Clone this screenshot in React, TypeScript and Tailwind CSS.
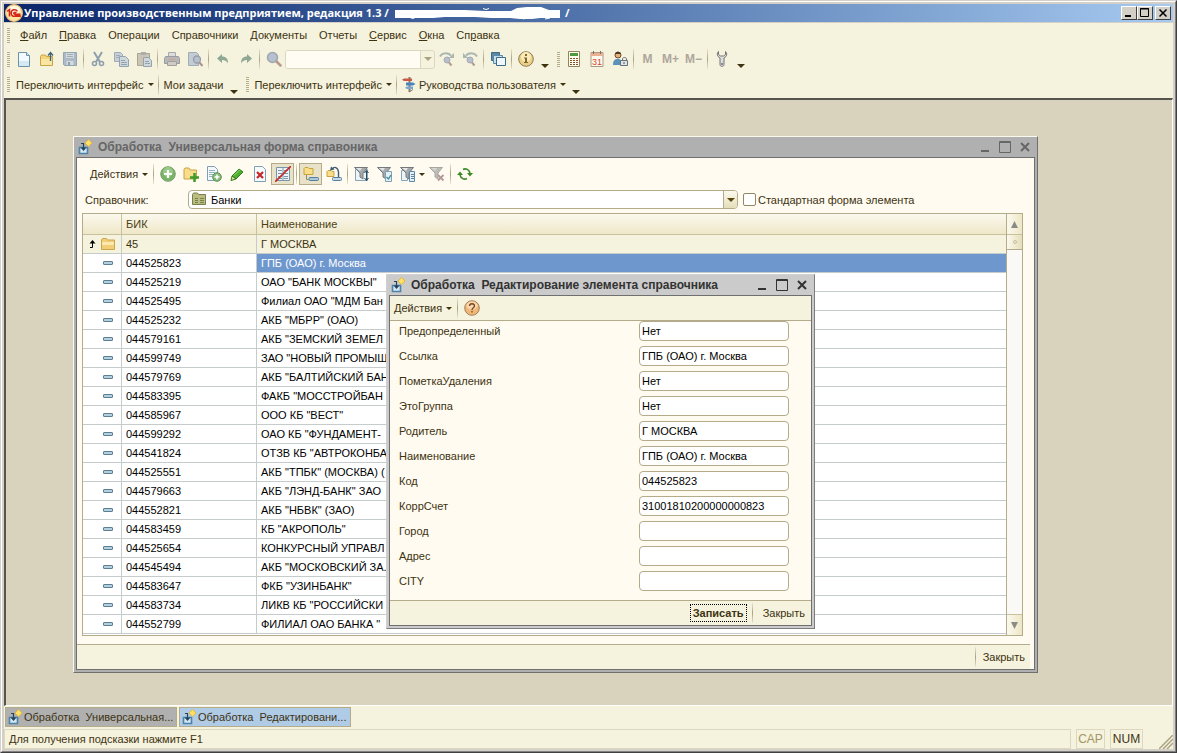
import React from 'react';

const Svg = ({ children, size = 16 }: { children: React.ReactNode; size?: number }) => {
  return <svg width={size} height={size} viewBox="0 0 16 16" fill="none" aria-hidden="true" className="shrink-0">
      {children}
    </svg>;
};

/* Main toolbar icons */
const NewIcon = () => <Svg>
    <path d="M2.500 1.500h8l3 3v11h-11z" fill="#f4fbff" stroke="#6d93a8" />
    <path d="M10.500 1.500v3h3" fill="#cfe4ef" stroke="#6d93a8" />
    <path d="M3 10h10v5H3z" fill="#d5e9f3" />
  </Svg>;
const OpenIcon = () => <Svg>
    <path d="M1.500 5.500l1-1.500h4l1 1.500h6v9h-12z" fill="#f3d57c" stroke="#c9a445" />
    <path d="M2 8h11v6H2z" fill="#fae6a2" />
    <path d="M11.500 10V2M9 4.500l2.500-3 2.500 3" stroke="#3b6276" strokeWidth="1.300" />
  </Svg>;
const SaveIcon = () => <Svg>
    <path d="M1.500 1.500h13v13h-12l-1-1z" fill="#abbac4" stroke="#93a5b1" />
    <path d="M4 2h8v5H4z" fill="#d3d9dc" />
    <path d="M5 3.500h6M5 5.500h6" stroke="#9eadb5" />
    <path d="M4.500 10h7v4h-7z" fill="#d3d9dc" />
    <path d="M6 11h2v3H6z" fill="#8d9fac" />
  </Svg>;
const CutIcon = () => <Svg>
    <path d="M4 1l6 10M12 1L6 11" stroke="#8ea0ae" strokeWidth="2" />
    <circle cx="4.500" cy="12.500" r="2" stroke="#8ea0ae" strokeWidth="1.600" />
    <circle cx="11.500" cy="12.500" r="2" stroke="#8ea0ae" strokeWidth="1.600" />
  </Svg>;
const CopyIcon = () => <Svg>
    <path d="M1.500 1.500h6l2 2v7h-8z" fill="#c8d0d6" stroke="#9dacb8" />
    <path d="M3 4.500h4M3 6.500h4" stroke="#9dacb8" />
    <path d="M6.500 5.500h6l3 3v7h-9z" fill="#d0d7db" stroke="#92a4b2" />
    <path d="M8 9.500h4M8 11.500h6M8 13.500h6" stroke="#92a4b2" />
  </Svg>;
const PasteIcon = () => <Svg>
    <path d="M1.500 2.500h12v12h-12z" fill="#ccc5b4" stroke="#a7a596" />
    <path d="M5 1h5v3H5z" fill="#a9aeb0" />
    <path d="M7.500 6.500h5l3 3v6h-8z" fill="#d0d7db" stroke="#92a4b2" />
    <path d="M9 10.500h4M9 12.500h5" stroke="#92a4b2" />
  </Svg>;
const PrintIcon = () => <Svg>
    <path d="M4.500 1.500h7v5h-7z" fill="#dcdcda" stroke="#a9aaad" />
    <path d="M1.500 5.500h13l1 2v5h-15v-5z" fill="#b8b8b8" stroke="#9b9c9f" />
    <path d="M3.500 10.500h9v4h-9z" fill="#cfcac2" stroke="#a0a0a0" />
    <path d="M5 8.500h6" stroke="#caa391" />
  </Svg>;
const PreviewIcon = () => <Svg>
    <path d="M1.500 1.500h8l2 2v11h-10z" fill="#c4cbd2" stroke="#a1adb7" />
    <circle cx="10" cy="8.500" r="3.500" fill="#b7c0cb" stroke="#959dac" strokeWidth="1.300" />
    <path d="M12.500 11.500l3 3.500" stroke="#ac9189" strokeWidth="2" />
  </Svg>;
const UndoIcon = ({ flip = false }: { flip?: boolean }) => <Svg>
    <g transform={flip ? 'matrix(-1 0 0 1 16 0)' : undefined}>
      <path d="M2 7.500l5-4.500v2.500c4 0 6 2 6 7-1-2-3-3.500-6-3.500v3z" fill="#8fa893" />
    </g>
  </Svg>;
const SearchIcon = () => <Svg>
    <circle cx="6.500" cy="6.500" r="5" fill="#b6c1ce" stroke="#9fa7b3" strokeWidth="1.500" />
    <path d="M10.500 10.500l4 4" stroke="#b59b8e" strokeWidth="2.500" strokeLinecap="round" />
  </Svg>;
const FindIcon = ({ flip = false }: { flip?: boolean }) => <Svg>
    <g transform={flip ? 'matrix(-1 0 0 1 16 0)' : undefined}>
      <path d="M1 5.500c2-4 8-4 11-1" stroke="#aab5b2" strokeWidth="2" />
      <path d="M15 2v5h-5z" fill="#aab5b2" />
    </g>
    <circle cx="8" cy="9" r="3" fill="#b6bfca" stroke="#a5abb6" />
    <path d="M10 11.500l2.500 3" stroke="#b09c96" strokeWidth="2" />
  </Svg>;
const WindowsIcon = () => <Svg>
    <path d="M1.500 1.500h8v8h-8z" fill="#5d88a4" stroke="#3d6b8b" />
    <path d="M3.500 4.500h9v8h-9z" fill="#c7dde9" stroke="#5a8aa8" />
    <path d="M6.500 6.500h9v8h-9z" fill="#f0f7fa" stroke="#3d6b8b" />
  </Svg>;
const InfoIcon = () => <Svg>
    <circle cx="8" cy="8" r="7.300" fill="#ecd089" stroke="#8c7a50" />
    <circle cx="8" cy="6" r="5" fill="#faeab8" />
    <path d="M7 3h2v2H7zM6 6.500h3V11h1v1H6v-1h1V7.500H6z" fill="#7d6a2a" />
  </Svg>;
const CalcIcon = () => <Svg>
    <path d="M2.500.5h11v15h-11z" fill="#fffdf0" stroke="#8e8560" />
    <path d="M4 2h8v3H4z" fill="#4c9a3c" />
    <path d="M4 7.500h8M4 9.500h8M4 11.500h8M4 13.500h8" stroke="#8a4f22" strokeDasharray="2 1" />
  </Svg>;
const CalendarIcon = () => <Svg>
    <path d="M2 1.500h12v14H2z" fill="#fffaf0" stroke="#a79a88" />
    <path d="M2 2h12v3H2z" fill="#e9b191" />
    <path d="M4.500 0v3M11.500 0v3" stroke="#7e6e61" />
    <text x="8" y="13.500" textAnchor="middle" fontSize="9" fontFamily="Liberation Sans, sans-serif" fill="#d8452c">31</text>
  </Svg>;
const UserLockIcon = () => <Svg>
    <circle cx="6" cy="4" r="3" fill="#e6b27c" stroke="#6d4a2b" />
    <path d="M3 3c1-3 5-3 6 0z" fill="#4f3a26" />
    <path d="M1 14c0-5 2-6 5-6s4 2 4 6z" fill="#5b93b8" />
    <path d="M10.500 10V8c0-2 4-2 4 0v2" stroke="#68717b" />
    <path d="M8.500 9.500h7v5h-7z" fill="#dfe4e8" stroke="#68717b" />
    <path d="M12 11v2" stroke="#4b545d" />
  </Svg>;
const WrenchIcon = () => <Svg>
    <path d="M4.500 0.500c-2 2-1.500 5 1.500 6.500v6.500c0 2.500 4 2.500 4 0V7c3-1.500 3.500-4.500 1.500-6.500v3l-2 1.500h-3l-2-1.500z" fill="#dcdcdc" stroke="#747474" />
    <circle cx="8" cy="13" r="1" fill="#747474" />
  </Svg>;
const SignpostIcon = () => <Svg>
    <path d="M8.500 0v15" stroke="#8a7a68" strokeWidth="2" />
    <path d="M3 1.500h8v2.500H3L1 2.750z" fill="#c75a48" />
    <path d="M5 5.500h7l2.500 1.500L12 8.500H5z" fill="#4c83bc" />
    <path d="M6 9.500h6v2.500H6L4 10.750z" fill="#78a7cf" />
    <path d="M8 15l4-2.500" stroke="#8a7a68" />
  </Svg>;
const LogoIcon = () => <Svg size={18}>
    <circle cx="8" cy="8" r="7.500" fill="#fbe3a4" stroke="#e9b368" />
    <ellipse cx="8" cy="5" rx="5.500" ry="3.500" fill="#fff8e0" />
    <path d="M2 6.500l2-1.500v6M11 6.500c-1.500-2.500-5.500-1.500-5.500 1.500s2 3 3.500 2.800h5M10 8c-1-1-2.200-.5-2.200.3s.7.900 1.500.9h4.500" stroke="#d3261b" strokeWidth="1.400" />
  </Svg>;

/* Directory form icons */
const ProcessingIcon = () => <Svg>
    <path d="M2.500 8.500h8v6h-8z" fill="#d3e6f2" stroke="#4d83a8" strokeWidth="1.600" />
    <path d="M6.500 4v6" stroke="#23455c" strokeWidth="1.200" />
    <path d="M3.500 8.500h6L6.500 12z" fill="#23455c" />
    <path d="M4 4.500h3" stroke="#23455c" />
    <path d="M11.500 0.500L15 4l-3.500 3.500L8 4z" fill="#ffe067" stroke="#e3b63c" />
  </Svg>;
const AddIcon = () => <Svg>
    <circle cx="8" cy="8" r="7.300" fill="#7ab366" stroke="#7b9f70" />
    <circle cx="8" cy="6" r="5" fill="#98c987" />
    <path d="M8 4v8M4 8h8" stroke="#fff" strokeWidth="2.200" />
  </Svg>;
const FolderAddIcon = () => <Svg>
    <path d="M1 3.500l1-1.500h4l1 2h6.500v9H1z" fill="#f8dd8a" stroke="#caa340" />
    <path d="M11.500 7v9M7 11.500h9" stroke="#3e9a28" strokeWidth="2.500" />
  </Svg>;
const DocAddIcon = () => <Svg>
    <path d="M1.500.5h7l3 3v11h-10z" fill="#f2f8fb" stroke="#7fa0b3" />
    <path d="M3 4.500h6M3 6.500h6M3 8.500h4M3 10.500h3" stroke="#94b3c4" />
    <circle cx="11" cy="11" r="4.300" fill="#86bb78" stroke="#5c8f50" />
    <path d="M11 8.500v5M8.500 11h5" stroke="#fff" strokeWidth="1.500" />
  </Svg>;
const PencilIcon = () => <Svg>
    <path d="M3 10l7-7 4 3-7 7z" fill="#4eae2c" stroke="#2f7d1a" />
    <path d="M3 10l4 3-5 1.500z" fill="#f3d9a3" stroke="#2f7d1a" />
    <path d="M5 9.500l6-6" stroke="#a0df83" />
  </Svg>;
const DeleteIcon = () => <Svg>
    <path d="M2.500.5h8l3 3v12h-11z" fill="#f6fafd" stroke="#7fa0b3" />
    <path d="M5 6l6 6M11 6l-6 6" stroke="#c6282a" strokeWidth="2.200" />
  </Svg>;
const ListOffIcon = () => <Svg>
    <path d="M1.500 1.500h13v13h-13z" fill="#edf4f8" stroke="#7896a8" />
    <path d="M3 4.500h4M9 4.500h4M3 7.500h4M9 7.500h4M3 10.500h4M9 10.500h4M3 12.500h4M9 12.500h4M8 2v12" stroke="#7896a8" />
    <path d="M0 16L16 0" stroke="#c6282a" strokeWidth="1.600" />
  </Svg>;
const HierarchyIcon = () => <Svg>
    <path d="M1 2.500l1-1h3l1 1h4v6H1z" fill="#f8dd8a" stroke="#caa340" />
    <path d="M3.500 9v4.500h2" stroke="#8f8a68" />
    <rect x="6" y="11.500" width="9.500" height="3" rx="1" fill="#a9c8dc" stroke="#557f9b" />
  </Svg>;
const MoveIcon = () => <Svg>
    <path d="M1 5.500l1-1h3l1 1h2v5H1z" fill="#f8dd8a" stroke="#caa340" />
    <path d="M6 3.500c2-3.500 6-2.500 6.500 2.500v5" stroke="#3d5c72" strokeWidth="1.400" />
    <path d="M4 4.500l1-4 3.500 3z" fill="#3d5c72" />
    <rect x="6.500" y="11.500" width="9" height="3" rx="1" fill="#c4d9e6" stroke="#557f9b" />
  </Svg>;
const Funnel = ({ muted = false }: { muted?: boolean }) => <>
    <path d="M.5 1.500h13L9 7v6l-3-2V7z" fill={muted ? '#bdbdb8' : '#a6aaad'} stroke={muted ? '#a7a7a2' : '#74797d'} />
    <path d="M2 2h6L6 5z" fill={muted ? '#d6d6d0' : '#e3e6e8'} />
  </>;
const FilterArrowIcon = () => <Svg>
    <path d="M1.500 3.500h12v11h-12z" fill="#edf4f8" stroke="#8aa4b4" />
    <Funnel />
    <path d="M12.500 5v9M10.500 12l2 2.500 2-2.500M10.500 7l2-2.500 2 2.500" stroke="#26475e" />
  </Svg>;
const FilterCheckIcon = () => <Svg>
    <Funnel />
    <path d="M8.500 5.500h6v10h-6z" fill="#e4f0f6" stroke="#7fa0b3" />
    <path d="M9.500 11l2 2 2.500-4" stroke="#3a8e9c" strokeWidth="1.400" />
  </Svg>;
const FilterListIcon = () => <Svg>
    <path d="M1.500 4.500h6v10h-6z" fill="#edf4f8" stroke="#8aa4b4" />
    <Funnel />
    <path d="M9.500 5.500h5v10h-5z" fill="#e4f0f6" stroke="#5f88a3" />
    <path d="M11 8.500h3M11 10.500h3M11 12.500h3" stroke="#5f88a3" />
  </Svg>;
const FilterOffIcon = () => <Svg>
    <Funnel muted />
    <path d="M9 9l5.500 5.500M14.500 9L9 14.500" stroke="#b39a9a" strokeWidth="1.800" />
  </Svg>;
const RefreshIcon = () => <Svg>
    <path d="M6 3.500c3-1.500 6 0 7 3.500M10 12.500c-3 1.500-6 0-7-3.500" stroke="#3a8a26" strokeWidth="1.600" />
    <path d="M10 7h6l-3 3.500zM0 9h6L3 5.500z" fill="#3a8a26" />
  </Svg>;
const HelpIcon = () => <Svg>
    <circle cx="8" cy="8" r="7.300" fill="#f0b878" stroke="#a87e56" />
    <ellipse cx="8" cy="5.500" rx="5.500" ry="4" fill="#f8d8b0" />
    <path d="M5.500 6c0-3 5-3 5 0 0 1.800-2.500 1.800-2.500 4M8 11v1.500" stroke="#7c4620" strokeWidth="1.300" />
  </Svg>;
const CatalogIcon = () => <Svg>
    <path d="M1.500 3.500l1-1.500h4l1 1.500h7v10h-13z" fill="#b9bd82" stroke="#7b7f4a" />
    <path d="M4 7.500h3M9 7.500h4M4 9.500h3M9 9.500h4M4 11.500h3M9 11.500h4" stroke="#7b7f4a" />
  </Svg>;
const FolderIcon = () => <Svg>
    <path d="M1.500 4l1-1.500h4l1 1.500h7v9.500h-13z" fill="#f2cf74" stroke="#cba650" />
    <path d="M2 6h12v3H2z" fill="#fae9ae" />
  </Svg>;
const UpIcon = () => <svg width="7" height="8" viewBox="0 0 7 8" fill="none" aria-hidden="true">
    <path d="M3.500 1v6.500H1" stroke="#000" />
    <path d="M.5 3.500L3.500 0l3 3.500z" fill="#000" />
  </svg>;

const DownArrow = () => <svg width="6" height="3" viewBox="0 0 6 3" aria-hidden="true" className="shrink-0">
    <path d="M0 0h6L3 3z" fill="#3d3311" />
  </svg>;

const Separator = () => <span className="w-[5px] h-5 shrink-0 flex justify-center">
    <span className="w-px bg-linear-to-b from-[#e9e4cb] via-[#a9a384] to-[#e9e4cb]" />
  </span>;

const Grip = () => <span className="w-[3px] h-[15px] shrink-0 bg-[repeating-linear-gradient(to_bottom,#b5ae8c_0px,#b5ae8c_1px,transparent_1px,transparent_2px)]" />;

const MoreButton = ({ label }: { label: string }) => <button type="button" aria-label={label} className="w-4 h-5 shrink-0 flex items-end justify-center pb-px">
    <svg width="8" height="4" viewBox="0 0 8 4" aria-hidden="true"><path d="M0 0h8L4 4z" fill="#3d3311" /></svg>
  </button>;

const ToolButton = ({ label, pressed = false, children }: { label: string; pressed?: boolean; children: React.ReactNode }) => {
  return <button type="button" aria-label={label} className={`w-[23px] h-[22px] shrink-0 flex items-center justify-center ${pressed ? 'border border-[#b3ab89] bg-[#e8e2c8]' : ''}`}>
      {children}
    </button>;
};

const MenuButton = ({ children }: { children: React.ReactNode }) => <button type="button" className="flex items-center gap-1 whitespace-nowrap">
    {children}
    <DownArrow />
  </button>;

const WindowControls = ({ className }: { className: string }) => {
  return <div className={`flex items-center gap-2 pr-1 ${className}`}>
      <button type="button" aria-label="Свернуть">
        <svg width="12" height="12" viewBox="0 0 12 12" aria-hidden="true"><path d="M2 9h8v2H2z" fill="currentColor" /></svg>
      </button>
      <button type="button" aria-label="Развернуть">
        <svg width="12" height="12" viewBox="0 0 12 12" fill="none" aria-hidden="true"><path d="M.5.5h11v11H.5zM.5 1.500h11" stroke="currentColor" /></svg>
      </button>
      <button type="button" aria-label="Закрыть окно">
        <svg width="12" height="12" viewBox="0 0 12 12" fill="none" aria-hidden="true"><path d="M2 2l8 8M10 2l-8 8" stroke="currentColor" strokeWidth="2" /></svg>
      </button>
    </div>;
};

const menu = [
  { key: '', accel: 'Ф', rest: 'айл' },
  { key: '', accel: 'П', rest: 'равка' },
  { key: 'Операции', accel: '', rest: '' },
  { key: 'Справочники', accel: '', rest: '' },
  { key: 'Документы', accel: '', rest: '' },
  { key: 'Отчеты', accel: '', rest: '' },
  { key: '', accel: 'С', rest: 'ервис' },
  { key: '', accel: 'О', rest: 'кна' },
  { key: 'Сп', accel: 'р', rest: 'авка' }
];

const banks = [
  ['044525823', 'ГПБ (ОАО) г. Москва'],
  ['044525219', 'ОАО "БАНК МОСКВЫ"'],
  ['044525495', 'Филиал ОАО "МДМ Бан'],
  ['044525232', 'АКБ "МБРР" (ОАО)'],
  ['044579161', 'АКБ "ЗЕМСКИЙ ЗЕМЕЛ'],
  ['044599749', 'ЗАО "НОВЫЙ ПРОМЫШ'],
  ['044579769', 'АКБ "БАЛТИЙСКИЙ БАН'],
  ['044583395', 'ФАКБ "МОССТРОЙБАН'],
  ['044585967', 'ООО КБ "ВЕСТ"'],
  ['044599292', 'ОАО КБ "ФУНДАМЕНТ-'],
  ['044541824', 'ОТЗВ КБ "АВТРОКОНБА'],
  ['044525551', 'АКБ "ТПБК" (МОСКВА) ('],
  ['044579663', 'АКБ "ЛЭНД-БАНК" ЗАО'],
  ['044552821', 'АКБ "НБВК" (ЗАО)'],
  ['044583459', 'КБ "АКРОПОЛЬ"'],
  ['044525654', 'КОНКУРСНЫЙ УПРАВЛ'],
  ['044545494', 'АКБ "МОСКОВСКИЙ ЗА.'],
  ['044583647', 'ФКБ "УЗИНБАНК"'],
  ['044583734', 'ЛИКВ КБ "РОССИЙСКИ'],
  ['044552799', 'ФИЛИАЛ ОАО БАНКА "']
];

const fields = [
  ['Предопределенный', 'Нет'],
  ['Ссылка', 'ГПБ (ОАО) г. Москва'],
  ['ПометкаУдаления', 'Нет'],
  ['ЭтоГруппа', 'Нет'],
  ['Родитель', 'Г МОСКВА'],
  ['Наименование', 'ГПБ (ОАО) г. Москва'],
  ['Код', '044525823'],
  ['КоррСчет', '31001810200000000823'],
  ['Город', ''],
  ['Адрес', ''],
  ['CITY', '']
];

const TitleBar = () => {
  return <header className="h-[18px] flex items-center bg-linear-to-r from-[#0a246a] to-[#a6caf0] text-white">
      <div className="w-5 flex justify-center"><LogoIcon /></div>
      <h1 className="font-['Open_Sans',sans-serif] text-[11px] font-bold whitespace-nowrap">
        Управление производственным предприятием, редакция 1.3 /
      </h1>
      <svg width="166" height="13" viewBox="0 0 166 13" aria-hidden="true" className="ml-[6px] mr-1 shrink-0">
        <path d="M0 3h70l20 1h26l6-3 10-1h14l8 3h11v8h-20l-8 1h-12l-10-1H96l-16-1H50l-12 1H20l-2 1-3-1H0z" fill="#fff" />
        <path d="M88 1.500l3 1 3-1M128 12l4-1M150 12l5-1" stroke="#fff" fill="none" />
      </svg>
      <span className="font-['Open_Sans',sans-serif] text-[11px] font-bold">/</span>
      <div className="ml-auto flex pr-[2px] text-black">
        <button type="button" aria-label="Свернуть приложение" className="w-4 h-[14px] bg-[#d4d0c8] border border-t-white border-l-white border-b-[#404040] border-r-[#404040]">
          <svg width="14" height="12" viewBox="0 0 14 12" aria-hidden="true"><path d="M3 8h6v2H3z" /></svg>
        </button>
        <button type="button" aria-label="Развернуть приложение" className="w-4 h-[14px] bg-[#d4d0c8] border border-t-white border-l-white border-b-[#404040] border-r-[#404040]">
          <svg width="14" height="12" viewBox="0 0 14 12" fill="none" aria-hidden="true"><path d="M2.500 1.500h8v8h-8zM2 2h9" stroke="#000" /></svg>
        </button>
        <button type="button" aria-label="Закрыть приложение" className="ml-[2px] w-4 h-[14px] bg-[#d4d0c8] border border-t-white border-l-white border-b-[#404040] border-r-[#404040]">
          <svg width="14" height="12" viewBox="0 0 14 12" fill="none" aria-hidden="true"><path d="M3.500 2.500l7 7M10.500 2.500l-7 7" stroke="#000" strokeWidth="1.500" /></svg>
        </button>
      </div>
    </header>;
};

const MainToolbar = () => {
  return <div className="h-6 flex items-center pl-[3px]">
      <Grip />
      <div className="flex items-center ml-[2px]">
        <ToolButton label="Новый"><NewIcon /></ToolButton>
        <ToolButton label="Открыть"><OpenIcon /></ToolButton>
        <ToolButton label="Сохранить"><SaveIcon /></ToolButton>
        <Separator />
        <ToolButton label="Вырезать"><CutIcon /></ToolButton>
        <ToolButton label="Копировать"><CopyIcon /></ToolButton>
        <ToolButton label="Вставить"><PasteIcon /></ToolButton>
        <Separator />
        <ToolButton label="Печать"><PrintIcon /></ToolButton>
        <ToolButton label="Просмотр"><PreviewIcon /></ToolButton>
        <Separator />
        <ToolButton label="Отменить"><UndoIcon /></ToolButton>
        <ToolButton label="Вернуть"><UndoIcon flip /></ToolButton>
        <Separator />
        <ToolButton label="Найти"><SearchIcon /></ToolButton>
        <div className="flex w-[150px] h-[19px] border border-[#dcd7bf] rounded-[3px] overflow-hidden">
          <input type="text" aria-label="Поиск" className="min-w-0 flex-1 bg-[#fffdf3] px-1 outline-none" />
          <button type="button" aria-label="История поиска" className="w-[14px] flex items-center justify-center border-l border-[#dcd7bf]">
            <svg width="8" height="4" viewBox="0 0 8 4" aria-hidden="true"><path d="M0 0h8L4 4z" fill="#a9a384" /></svg>
          </button>
        </div>
        <ToolButton label="Найти следующий"><FindIcon /></ToolButton>
        <ToolButton label="Найти предыдущий"><FindIcon flip /></ToolButton>
        <Separator />
        <ToolButton label="Окна"><WindowsIcon /></ToolButton>
        <Separator />
        <ToolButton label="Описание"><InfoIcon /></ToolButton>
        <MoreButton label="Настройка панели" />
      </div>
      <div className="flex items-center ml-1">
        <Grip />
        <div className="w-[2px]" />
        <ToolButton label="Калькулятор"><CalcIcon /></ToolButton>
        <ToolButton label="Календарь"><CalendarIcon /></ToolButton>
        <ToolButton label="Пользователи"><UserLockIcon /></ToolButton>
        <Separator />
        <button type="button" className="w-[23px] text-xs font-bold text-[#aea79c]">M</button>
        <button type="button" className="w-[23px] text-xs font-bold text-[#aea79c]">M+</button>
        <button type="button" className="w-[23px] text-xs font-bold text-[#aea79c]">M−</button>
        <Separator />
        <ToolButton label="Сервис"><WrenchIcon /></ToolButton>
        <MoreButton label="Настройка сервиса" />
      </div>
    </div>;
};

const InterfaceBar = () => {
  return <div className="h-[27px] flex items-center pl-[3px]">
      <Grip />
      <div className="flex items-center gap-[2px] ml-[6px]">
        <MenuButton>Переключить интерфейс</MenuButton>
        <Separator />
        <button type="button" className="px-px whitespace-nowrap">Мои задачи</button>
        <MoreButton label="Ещё" />
      </div>
      <div className="flex items-center gap-[2px] ml-1">
        <Grip />
        <div className="w-px" />
        <MenuButton>Переключить интерфейс</MenuButton>
        <Separator />
        <SignpostIcon />
        <MenuButton>Руководства пользователя</MenuButton>
        <MoreButton label="Настройка руководств" />
      </div>
    </div>;
};

const BankTable = () => {
  return <div className="flex border border-[#b3ab89] bg-white">
      <div className="flex-1 min-w-0 pb-px">
        <table className="w-full table-fixed border-separate border-spacing-0 text-left text-black">
          <colgroup>
            <col className="w-[39px]" />
            <col className="w-[135px]" />
            <col />
          </colgroup>
          <thead>
            <tr className="h-[21px] bg-linear-to-b from-[#fbf9ee] to-[#eee6c6] text-[#4d3f12]">
              <th aria-label="Вид" className="border-r border-b border-[#c9c19c] p-0" />
              <th className="border-r border-b border-[#c9c19c] py-0 px-1 font-normal">БИК</th>
              <th className="border-b border-[#c9c19c] py-0 px-1 font-normal">Наименование</th>
            </tr>
          </thead>
          <tbody>
            <tr className="h-[19px] bg-[#f5f2dd] text-[#3d3311]">
              <td className="border-r border-b border-[#c5cccb] p-0">
                <div className="flex items-center justify-end gap-1 pr-[5px] h-[18px]"><UpIcon /><FolderIcon /></div>
              </td>
              <td className="border-r border-b border-[#c5cccb] py-0 px-1">45</td>
              <td className="border-b border-[#c5cccb] py-0 px-1">Г МОСКВА</td>
            </tr>
            {banks.map(([bik, name], index) => <tr key={bik} className="h-[19px]">
                <td className="border-r border-b border-[#c5cccb] p-0">
                  <div className="ml-5 w-[10px] h-1 rounded-[1px] border border-[#5d7f93] bg-[#b4cfde]" />
                </td>
                <td className="border-r border-b border-[#c5cccb] py-0 px-1">{bik}</td>
                <td className={`border-b border-[#c5cccb] py-0 px-1 whitespace-nowrap ${index === 0 ? 'bg-[#6e97ce] text-white' : ''}`}>{name}</td>
              </tr>)}
          </tbody>
        </table>
      </div>
      <div className="w-4 flex flex-col border-l border-[#b3ab89] bg-[#faf9f5]">
        <button type="button" aria-label="Вверх" className="h-[21px] flex items-center justify-center border-b border-[#c9c19c] bg-linear-to-r from-[#fbf9ee] to-[#eee6c6]">
          <svg width="7" height="7" viewBox="0 0 7 7" aria-hidden="true"><path d="M0 7h7L3.500 0z" fill="#8b8b86" /></svg>
        </button>
        <div className="h-[15px] flex items-center justify-center border-b border-[#b3ab89] bg-linear-to-r from-[#fbf9ee] to-[#e6deb9]">
          <span className="w-1 h-1 rounded-full border border-[#c6bf9e]" />
        </div>
        <button type="button" aria-label="Вниз" className="mt-auto h-[21px] flex items-center justify-center border-t border-[#c9c19c] bg-linear-to-r from-[#fbf9ee] to-[#eee6c6]">
          <svg width="7" height="7" viewBox="0 0 7 7" aria-hidden="true"><path d="M0 0h7L3.500 7z" fill="#8b8b86" /></svg>
        </button>
      </div>
    </div>;
};

const DirectoryWindow = () => {
  return <section className="absolute left-[67px] top-9 w-[965px] border border-t-[#fbf9ee] border-l-[#fbf9ee] border-b-[#6f6f6f] border-r-[#6f6f6f] bg-[#b0b0b0] px-[2px] pb-[2px]">
      <div className="h-5 flex items-center text-[#666]">
        <div className="w-[22px] pl-px"><ProcessingIcon /></div>
        <h2 className="flex-1 text-xs font-bold whitespace-pre">Обработка  Универсальная форма справоника</h2>
        <WindowControls className="text-[#666]" />
      </div>
      <div className="border border-[#6f6f6f] bg-[#fffbf0]">
        <div className="h-8 flex items-center pl-[13px]">
          <MenuButton>Действия</MenuButton>
          <div className="w-[3px]" />
          <Separator />
          <ToolButton label="Добавить"><AddIcon /></ToolButton>
          <ToolButton label="Новая группа"><FolderAddIcon /></ToolButton>
          <ToolButton label="Добавить копированием"><DocAddIcon /></ToolButton>
          <ToolButton label="Изменить"><PencilIcon /></ToolButton>
          <ToolButton label="Удалить"><DeleteIcon /></ToolButton>
          <ToolButton label="Пометка удаления" pressed><ListOffIcon /></ToolButton>
          <Separator />
          <ToolButton label="Иерархический просмотр" pressed><HierarchyIcon /></ToolButton>
          <ToolButton label="Переместить в группу"><MoveIcon /></ToolButton>
          <Separator />
          <ToolButton label="Отбор и сортировка"><FilterArrowIcon /></ToolButton>
          <ToolButton label="Отбор по значению"><FilterCheckIcon /></ToolButton>
          <ToolButton label="История отборов"><FilterListIcon /></ToolButton>
          <DownArrow />
          <ToolButton label="Отключить отбор"><FilterOffIcon /></ToolButton>
          <Separator />
          <ToolButton label="Обновить"><RefreshIcon /></ToolButton>
        </div>
        <div className="h-[19px] flex items-center pl-2">
          <label htmlFor="catalog" className="w-[103px] text-[#3d3311]">Справочник:</label>
          <div className="relative w-[550px] h-[19px]">
            <select id="catalog" className="w-full h-[19px] appearance-none border border-[#b3ab89] rounded-[4px] bg-white pl-[22px] text-black">
              <option>Банки</option>
            </select>
            <span className="absolute left-[3px] top-px pointer-events-none"><CatalogIcon /></span>
            <span className="absolute right-px top-px w-[14px] h-[17px] flex items-center justify-center border-l border-[#b3ab89] rounded-r-[3px] bg-linear-to-b from-[#fbf9ee] to-[#e6deb9] pointer-events-none">
              <svg width="8" height="4" viewBox="0 0 8 4" aria-hidden="true"><path d="M0 0h8L4 4z" fill="#5a4710" /></svg>
            </span>
          </div>
          <label className="flex items-center gap-[2px] ml-[5px]">
            <input type="checkbox" className="appearance-none w-[13px] h-[13px] border border-[#8f8964] rounded-[2px] bg-white" />
            Стандартная форма элемента
          </label>
        </div>
        <div className="pl-[5px] pr-[11px] pt-1 pb-2">
          <BankTable />
        </div>
        <div className="mr-1 h-[25px] flex items-center justify-end border-t border-[#b3ab89] bg-[#f5f2dd]">
          <Separator />
          <button type="button" className="px-[5px]">Закрыть</button>
        </div>
      </div>
    </section>;
};

const ElementWindow = () => {
  return <section className="absolute left-[380px] top-[174px] w-[429px] border border-t-[#d0d0d0] border-l-[#d0d0d0] border-b-[#7d7d7d] border-r-[#7d7d7d] bg-[#cbcbcb] px-[2px] pb-[2px]">
      <div className="h-5 flex items-center text-[#333]">
        <div className="w-[22px] pl-px"><ProcessingIcon /></div>
        <h2 className="flex-1 text-xs font-bold whitespace-pre">Обработка  Редактирование элемента справочника</h2>
        <WindowControls className="text-[#333]" />
      </div>
      <form className="border border-[#6f6f6f] bg-[#fffbf0]">
        <div className="h-[25px] flex items-center pl-1 border-b border-[#b3ab89] bg-[#f5f2dd]">
          <MenuButton>Действия</MenuButton>
          <div className="w-[3px]" />
          <Separator />
          <ToolButton label="Справка"><HelpIcon /></ToolButton>
        </div>
        <div className="flex flex-col gap-[5px] pl-[9px] pb-[9px]">
          {fields.map(([name, value]) => <div key={name} className="flex items-center">
              <label htmlFor={name} className="w-60">{name}</label>
              <input id={name} type="text" defaultValue={value} className="w-[150px] h-5 border border-[#b3ab89] rounded-[4px] bg-white px-[2px] text-black outline-none" />
            </div>)}
        </div>
        <div className="h-[25px] flex items-center justify-end gap-[3px] border-t border-[#b3ab89] bg-[#f5f2dd]">
          <button type="button" className="h-[18px] px-[2px] border border-dotted border-black font-bold">Записать</button>
          <Separator />
          <button type="button" className="pl-[5px] pr-[6px]">Закрыть</button>
        </div>
      </form>
    </section>;
};

const App = () => {
  return <div className="min-h-screen flex flex-col border border-t-[#d4d0c8] border-l-[#d4d0c8] border-b-[#404040] border-r-[#404040] font-['Liberation_Sans',Arial,sans-serif] text-[11px] leading-[14px] text-[#3d3311]">
      <div className="flex-1 flex flex-col border border-t-white border-l-white border-b-[#808080] border-r-[#808080] bg-[#d4d0c8] p-[2px]">
        <TitleBar />
        {/* Menu and toolbars */}
        <div className="mt-px bg-[#f5f2dd]">
          <nav className="h-6 flex items-center pl-[3px]">
            <Grip />
            <div className="flex gap-3 ml-[10px]">
              {menu.map(item => <button key={item.key + item.accel} type="button">
                  {item.key}<span className="underline">{item.accel}</span>{item.rest}
                </button>)}
            </div>
          </nav>
          <MainToolbar />
          <InterfaceBar />
        </div>
        {/* Workspace */}
        <main className="relative flex-1 overflow-hidden border-t-2 border-l-2 border-r border-b border-t-[#55544e] border-l-[#55544e] border-r-white border-b-white bg-[#d9d3bd]">
          <DirectoryWindow />
          <ElementWindow />
        </main>
        {/* Open windows */}
        <div className="flex gap-[2px] bg-[#f5f2dd] px-px pt-px pb-[2px]">
          <button type="button" className="w-[172px] h-5 flex items-center gap-px pl-px border border-[#b3ab89] bg-[#b0b0b0]">
            <ProcessingIcon /><span className="whitespace-pre">Обработка  Универсальная...</span>
          </button>
          <button type="button" className="w-[172px] h-5 flex items-center gap-px pl-px border border-[#b3ab89] bg-[#b0cbe6]">
            <ProcessingIcon /><span className="whitespace-pre">Обработка  Редактировани...</span>
          </button>
        </div>
        <footer className="h-5 flex gap-[5px] bg-[#f5f2dd]">
          <div className="flex-1 border border-[#dcd8bf] pl-1 flex items-center">Для получения подсказки нажмите F1</div>
          <div className="w-[29px] border border-[#dcd8bf] flex items-center justify-center text-xs text-[#a39768]">CAP</div>
          <div className="w-[33px] border border-[#dcd8bf] flex items-center justify-center text-xs">NUM</div>
          <div className="w-[25px] flex items-end justify-end">
            <svg width="14" height="14" viewBox="0 0 14 14" aria-hidden="true"><path d="M0 14L14 0M4 14L14 4M8 14l6-6" stroke="#a9a384" strokeWidth="1.500" /></svg>
          </div>
        </footer>
      </div>
    </div>;
};
export default App;
